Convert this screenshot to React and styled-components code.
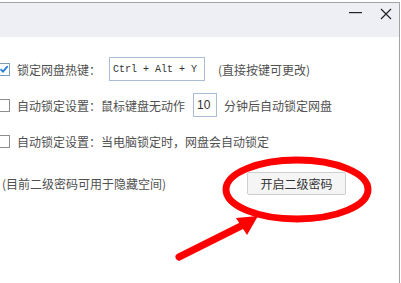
import React from 'react';
import styled, {createGlobalStyle} from 'styled-components';

const Global = createGlobalStyle`
  html, body { margin: 0; padding: 0; background: #fff; }
  body { width: 401px; height: 283px; overflow: hidden; position: relative; }
`;

const Page = styled.div`
  padding: 2px 1px 0 0;
  font-family: "Noto Sans CJK SC", "Noto Sans", sans-serif;
  font-size: 12px;
  color: #505050;
`;

const Window = styled.div`
  border-top: 1px solid #a3a3a3;
  border-right: 1px solid #a3a3a3;
  height: 281px;
  box-sizing: border-box;
  margin-left: -3px;
`;

const TitleBar = styled.div`
  height: 34px;
  background: #eeeff5;
  display: flex;
  justify-content: flex-end;
  align-items: flex-start;
`;

const TitleButton = styled.div`
  width: ${({w}) => w}px;
  height: 20px;
  display: flex;
  align-items: center;
  justify-content: center;
  margin-top: ${({top}) => top}px;
`;

const Body = styled.div`
  padding: 20px 0 0 0;
  display: flex;
  flex-direction: column;
  gap: 12px;
`;

const Row = styled.div`
  display: flex;
  align-items: center;
  height: 24px;
  white-space: nowrap;
`;

const Box = styled.span`
  width: 11px;
  height: 11px;
  border: 1px solid ${({checked}) => checked ? '#7f9db9' : '#8e8e8e'};
  background: #fff;
  margin-right: 7px;
  display: flex;
  align-items: center;
  justify-content: center;
  flex: none;
`;

const KeyInput = styled.div`
  width: ${({w}) => w}px;
  height: 24px;
  box-sizing: border-box;
  border: 1px solid #abbcd6;
  margin: 0 ${({after}) => after}px 0 ${({before}) => before}px;
  display: flex;
  align-items: center;
  padding-left: 3px;
  font-family: ${({mono}) => mono ? '"Liberation Mono", monospace' : '"Liberation Sans", sans-serif'};
  font-size: ${({mono}) => mono ? 10 : 12}px;
  color: #333;
`;

const FooterRow = styled.div`
  display: flex;
  align-items: center;
  margin-top: 7px;
  padding-left: 5px;
`;

const Note = styled.span`
  width: 245px;
`;

const Button = styled.div`
  width: 99px;
  height: 23px;
  box-sizing: border-box;
  border: 1px solid #cfcfcf;
  border-radius: 2px;
  background: #f5f5f5;
  color: #333;
  display: flex;
  align-items: center;
  justify-content: center;
  font-size: 12px;
`;

const Overlay = styled.svg`
  position: absolute;
  left: 0;
  top: 0;
  pointer-events: none;
`;

const Check = ({checked}) => (
    <Box checked={checked}>
      {checked && (
          <svg width="10" height="10" viewBox="0 0 10 10">
            <path d="M1.5 5.2 L4 7.7 L8.7 2.2" fill="none" stroke="#2a7fd8" strokeWidth="1.8"/>
          </svg>
      )}
    </Box>
);

export default function App() {
    return (
        <Page>
          <Global/>
          <Window>
            <TitleBar>
              <TitleButton w={36} top={0}>
                <svg width="13" height="2"><rect width="13" height="1.2" fill="#222"/></svg>
              </TitleButton>
              <TitleButton w={26} top={1}>
                <svg width="12" height="12" viewBox="0 0 12 12">
                  <path d="M1 1 L11 11 M11 1 L1 11" stroke="#222" strokeWidth="1.2"/>
                </svg>
              </TitleButton>
            </TitleBar>
            <Body>
              <Row>
                <Check checked/>
                锁定网盘热键：
                <KeyInput w={96} before={8} after={13} mono>Ctrl + Alt + Y</KeyInput>
                (直接按键可更改)
              </Row>
              <Row>
                <Check/>
                自动锁定设置：鼠标键盘无动作
                <KeyInput w={24} before={8} after={7}>10</KeyInput>
                分钟后自动锁定网盘
              </Row>
              <Row>
                <Check/>
                自动锁定设置：当电脑锁定时，网盘会自动锁定
              </Row>
              <FooterRow>
                <Note>(目前二级密码可用于隐藏空间)</Note>
                <Button>开启二级密码</Button>
              </FooterRow>
            </Body>
          </Window>
          <Overlay width="401" height="283">
            <ellipse cx="297" cy="189.5" rx="71" ry="29.5" fill="none" stroke="#ff0000" strokeWidth="7"/>
            <line x1="179" y1="257" x2="243" y2="225" stroke="#ff0000" strokeWidth="7" strokeLinecap="round"/>
            <polygon points="258,216 236,218 247,235" fill="#ff0000"/>
          </Overlay>
        </Page>
    );
}
